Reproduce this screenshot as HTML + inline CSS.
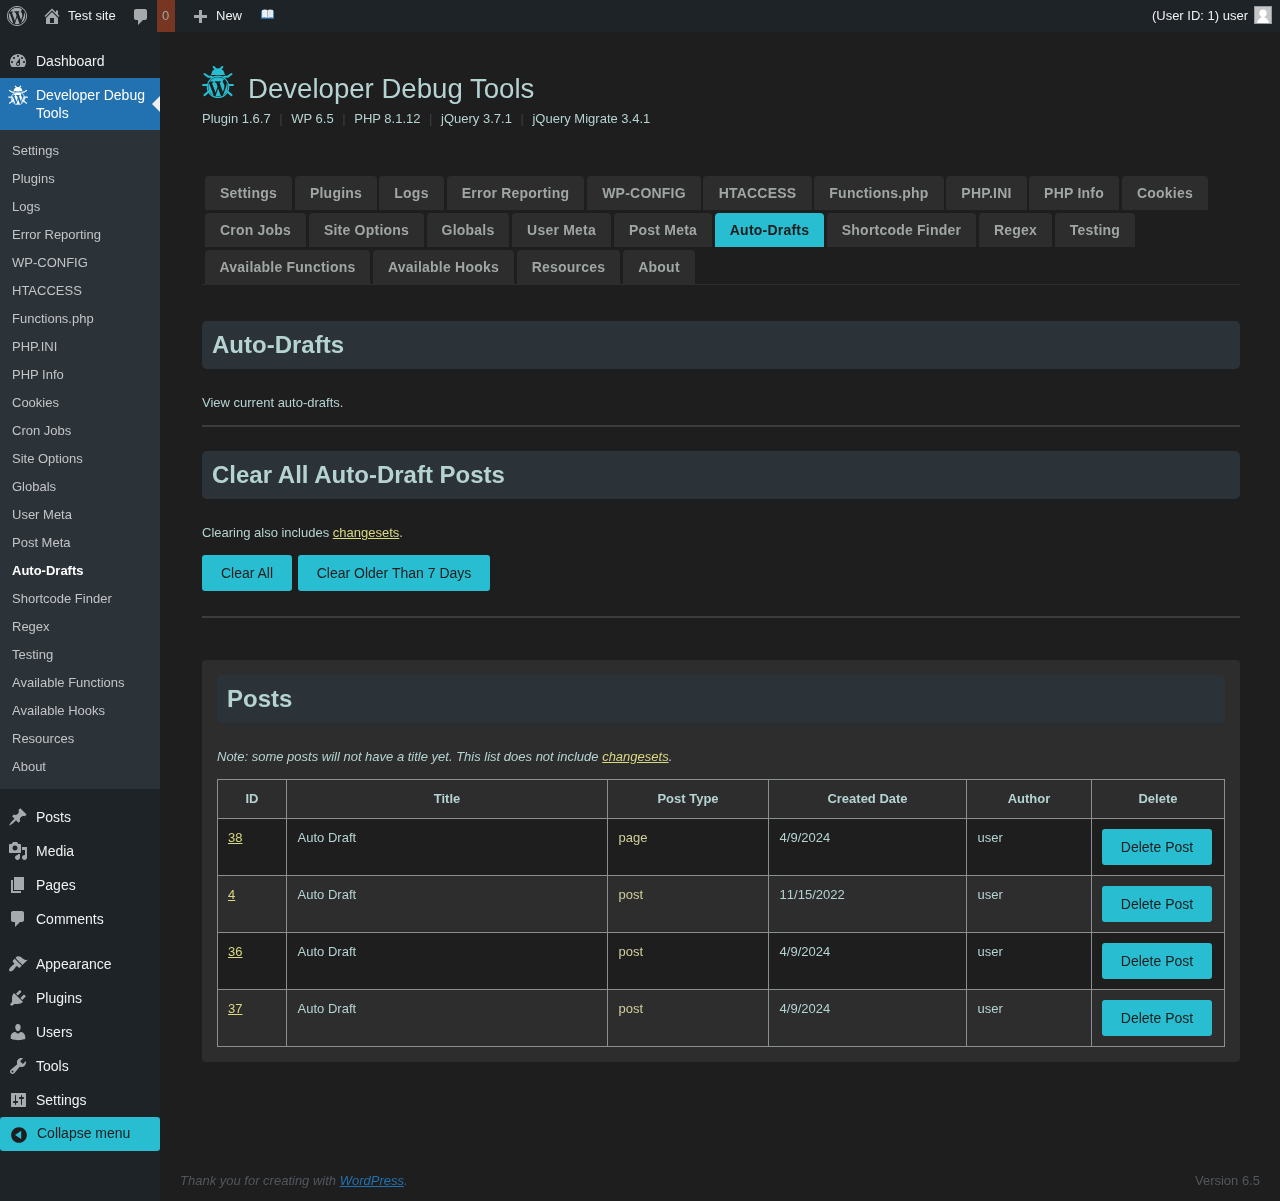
<!DOCTYPE html>
<html lang="en"><head><meta charset="utf-8"><title>Developer Debug Tools</title>
<style>
*{box-sizing:border-box}
html,body{margin:0;padding:0}
body{width:1280px;height:1201px;overflow:hidden;background:#1e1e1e;font-family:"Liberation Sans",sans-serif;font-size:13px;line-height:1.4em;color:#b5d3d2;position:relative}
a{color:#d9d883;text-decoration:underline}
#bar,#menu,#content,#foot{will-change:transform}
#bar{position:absolute;left:0;top:0;width:1280px;height:32px;background:#1d2327;color:#f0f0f1;font-size:13px;line-height:32px}
#bar .it{position:absolute;top:0;height:32px;white-space:nowrap}
#bar svg{position:absolute;color:#a7aaad}
#menu{position:absolute;left:0;top:32px;width:160px;height:1169px;background:#1d2327}
#menu .top{position:absolute;left:0;width:160px;height:34px;color:#f0f0f1;font-size:14px;line-height:18px}
#menu .top span{position:absolute;left:36px;top:8px;white-space:nowrap}
#menu .top svg{position:absolute;left:8px;top:7px;color:#a7aaad}
#menu .cur{background:#2271b1;color:#fff;height:52px}
#menu .cur span{white-space:normal;width:116px}
#sub{position:absolute;left:0;top:98px;width:160px;height:659px;background:#2c3338;padding-top:7px}
#sub div{height:28px;padding:5px 12px;font-size:13px;line-height:18px;color:#c3c4c7;white-space:nowrap}
#sub div.on{color:#fff;font-weight:bold}
#collapse{position:absolute;left:0;top:1085px;width:160px;height:34px;background:#28bdd0;color:#1e1e1e;border-radius:3px;font-size:14px;line-height:34px}
#collapse span{position:absolute;left:37px;top:-1px}
#collapse svg{position:absolute;left:9px;top:8px;color:#1e1e1e}
#content{position:absolute;left:202px;top:32px;width:1038px}
h1{position:absolute;left:46px;top:39px;margin:0;font-size:27.6px;font-weight:normal;line-height:36px;color:#b5d3d2;white-space:nowrap}
#ver{position:absolute;left:0;top:78px;white-space:nowrap;line-height:18px}
#ver i{font-style:normal;color:#3a4046;margin:0 8.700px 0 8.500px}
#tabs{position:absolute;left:0;top:144px;width:1038px;height:109px;border-bottom:1px solid #2d2d2d}
#tabs a{position:absolute;height:34px;padding:0;text-align:center;background:#2d2d2d;color:#9fa6a4;font-weight:bold;font-size:14px;letter-spacing:.22px;line-height:34px;text-decoration:none;border-radius:4px 4px 0 0;white-space:nowrap}
#tabs a.on{background:#28bdd0;color:#1e1e1e}
#tabs br{clear:both}
.hd{position:absolute;left:0;width:1038px;height:48px;background:#2c3338;border-radius:5px;padding:0 10px;font-size:24px;font-weight:bold;line-height:47px;color:#b5d3d2}
.p{position:absolute;left:0;white-space:nowrap;line-height:18px}
.hr{position:absolute;left:0;width:1038px;height:2px;background:#3c3c3c}
.btn{position:absolute;height:36px;background:#28bdd0;color:#1e1e1e;border-radius:3px;font-size:14px;line-height:36px;text-align:center}
#box{position:absolute;left:0;top:628px;width:1038px;height:402px;background:#2d2d2d;border-radius:4px}
#box .hd{left:15px;top:15px;width:1008px}
table{position:absolute;left:15px;top:119px;width:1008px;border-collapse:collapse;table-layout:fixed}
th,td{border:1px solid #8a8f8f;padding:0 10px;vertical-align:top;text-align:left}
th{height:39px;text-align:center;font-weight:bold;line-height:37px}
td{height:57px;padding-top:10px;line-height:18px}
tr.d td{background:#1e1e1e}
td.y{color:#d1ce9d}
td+td{padding-left:10.600px}
td:last-child{padding-left:10px}
td .btn{position:static;display:block;width:110px;margin-top:0}
#foot{position:absolute;left:180px;top:1172px;width:1080px;color:#50575e;font-style:italic;line-height:18px}
#foot a{color:#2271b1}
#foot span{position:absolute;right:0;top:0;font-style:normal}
</style></head><body>

<div id="bar">
<svg style="left:7px;top:6px" width="20" height="20" viewBox="0 0 20 20"><circle cx="10" cy="10" r="9.600" fill="none" stroke="currentColor" stroke-width="1.0"/><g transform="translate(10,10) scale(0.9168) translate(-10,-10)"><path fill="currentColor" stroke="none" d="M7.780 15.370L4.370 6.220c.55-.02 1.170-.08 1.170-.08.5-.06.44-1.130-.06-1.110 0 0-1.450.11-2.370.11-.18 0-.37 0-.58-.01C4.120 2.690 6.870 1.110 10 1.110c2.330 0 4.450.870 6.050 2.340-.68-.11-1.650.39-1.650 1.580 0 .74.45 1.360.9 2.100.35.610.55 1.360.55 2.460 0 1.490-1.400 5-1.400 5l-3.030-8.370c.54-.02.82-.17.82-.17.5-.05.44-1.250-.06-1.220 0 0-1.440.12-2.380.12-.87 0-2.330-.12-2.330-.12-.5-.03-.56 1.200-.06 1.220l.92.080 1.260 3.410zM17.410 10c.24-.64.74-1.870.43-4.250.7 1.290 1.050 2.710 1.050 4.250 0 3.290-1.730 6.240-4.400 7.780.97-2.590 1.940-5.200 2.920-7.780zM6.100 18.090C3.120 16.650 1.110 13.530 1.110 10c0-1.300.23-2.480.72-3.590C3.250 10.300 4.670 14.200 6.100 18.090zm4.030-6.630l2.580 6.980c-.86.29-1.760.45-2.710.45-.79 0-1.570-.11-2.290-.33.81-2.380 1.620-4.740 2.420-7.100z"/></g></svg>
<svg class="" style="left:42px;top:6px" width="20" height="20" viewBox="0 0 20 20"><path fill="currentColor" d="M16 8.5l1.53 1.53-1.06 1.060L10 4.620l-6.470 6.470-1.060-1.060L10 2.500l4 4v-2h2v4zm-6-2.460l6 5.990V18H4v-5.970zM12 17v-5H8v5h4z"/></svg>
<div class="it" style="left:68px">Test site</div>
<svg class="" style="left:131px;top:7px" width="20" height="20" viewBox="0 0 20 20"><path fill="currentColor" d="M5 2h9c1.1 0 2 .9 2 2v7c0 1.1-.9 2-2 2h-2l-5 5v-5H5c-1.1 0-2-.9-2-2V4c0-1.1.9-2 2-2z"/></svg>
<div class="it" style="left:157px;width:18px;background:#763622;color:#9fa3a6;text-align:center;text-indent:-1px">0</div>
<svg class="" style="left:190px;top:8px" width="20" height="20" viewBox="0 0 20 20"><path fill="currentColor" d="M17 7v3h-5v5H9v-5H4V7h5V2h3v5h5z"/></svg>
<div class="it" style="left:216px">New</div>
<svg style="left:261px;top:9px" width="13.200" height="10" viewBox="0 0 13.200 10"><rect x="0" y="1.700" width="13.200" height="8.100" rx=".9" fill="#3a7dbd"/><path d="M1.100 1.100Q4.200 .1 6.400 1.100V8.800Q4.200 7.900 1.100 8.600z" fill="#ecf0f3"/><path d="M12.100 1.100Q9 .1 6.800 1.100V8.800Q9 7.900 12.100 8.600z" fill="#e4e9ee"/><path d="M6.600 1.100V8.900" stroke="#a9b7c2" stroke-width=".5"/></svg>
<div class="it" style="right:32px">(User ID: 1) user</div>
<svg style="left:1254px;top:6px" width="18" height="18" viewBox="0 0 18 18"><rect width="18" height="18" fill="#c6c6c6"/><circle cx="9" cy="7.300" r="3.700" fill="#fff"/><path d="M2.900 17.200C3.400 14.300 5.200 12.500 7.600 11.300L7.800 10.200L10.200 10.200L10.400 11.300C12.800 12.500 14.600 14.300 15.100 17.200z" fill="#fff"/><rect x=".5" y=".5" width="17" height="17" fill="none" stroke="#989ba0"/></svg>
</div>
<div id="menu">
<div class="top" style="top:12px"><svg class="" style="" width="20" height="20" viewBox="0 0 20 20"><path fill="currentColor" d="M3.76 16h12.48c1.1-1.37 1.76-3.11 1.76-5 0-4.42-3.580-8-8-8s-8 3.580-8 8c0 1.890.660 3.630 1.760 5zM10 4c.550 0 1 .450 1 1s-.450 1-1 1-1-.450-1-1 .450-1 1-1zM6 6c.550 0 1 .450 1 1s-.450 1-1 1-1-.450-1-1 .450-1 1-1zm8 0c.550 0 1 .450 1 1s-.450 1-1 1-1-.450-1-1 .450-1 1-1zm-5.370 5.550L12 7v6c0 1.100-.900 2-2 2s-2-.900-2-2c0-.570.240-1.080.630-1.450zM4 10c.550 0 1 .450 1 1s-.450 1-1 1-1-.450-1-1 .450-1 1-1zm12 0c.550 0 1 .450 1 1s-.450 1-1 1-1-.450-1-1 .450-1 1-1zm-5 3c0-.550-.450-1-1-1s-1 .450-1 1 .450 1 1 1 1-.450 1-1z"/></svg><span>Dashboard</span></div>
<div class="top cur" style="top:46px"><svg class="" width="20" height="20.00" viewBox="0 0 32 33" preserveAspectRatio="none" fill="none" stroke="#fff" stroke-linecap="round" stroke-linejoin="round">
<path d="M11.700 2l2.100 2.300M20.300 2l-2.100 2.300" stroke-width="1.9"/>
<path d="M9.100 10.100a6.900 6.900 0 0 1 13.800 0z" fill="#fff" stroke="none"/>
<path d="M2.500 9l3.700 2.700h3.600M29.500 9l-3.700 2.700h-3.600M1.100 20h4.200M30.900 20h-4.200M2.500 30.100l5-4.300M29.500 30.100l-5-4.300" stroke-width="1.9"/>
<circle cx="16" cy="21.9" r="10.700" fill="none" stroke="#fff" stroke-width="1.2"/><g transform="translate(16,21.9) scale(1.0574) translate(-10,-10)"><path fill="#fff" stroke="none" d="M7.780 15.370L4.370 6.220c.55-.02 1.170-.08 1.170-.08.5-.06.44-1.130-.06-1.110 0 0-1.450.11-2.370.11-.18 0-.37 0-.58-.01C4.120 2.690 6.870 1.110 10 1.110c2.330 0 4.450.870 6.050 2.340-.68-.11-1.650.39-1.650 1.580 0 .74.45 1.360.9 2.100.35.610.55 1.360.55 2.460 0 1.490-1.400 5-1.400 5l-3.030-8.370c.54-.02.82-.17.82-.17.5-.05.44-1.250-.06-1.220 0 0-1.440.12-2.380.12-.87 0-2.330-.12-2.330-.12-.5-.03-.56 1.200-.06 1.220l.92.080 1.260 3.410zM17.410 10c.24-.64.74-1.870.43-4.250.7 1.290 1.050 2.710 1.050 4.250 0 3.290-1.730 6.240-4.400 7.780.97-2.590 1.940-5.200 2.920-7.780zM6.100 18.090C3.120 16.650 1.110 13.530 1.110 10c0-1.300.23-2.480.72-3.590C3.250 10.300 4.670 14.200 6.100 18.090zm4.030-6.630l2.580 6.980c-.86.29-1.760.45-2.710.45-.79 0-1.570-.11-2.290-.33.81-2.380 1.620-4.740 2.420-7.100z"/></g>
</svg><span>Developer Debug Tools</span><b style="position:absolute;right:0;top:18px;width:0;height:0;border:8px solid transparent;border-right-color:#f0f0f1;border-left:0"></b></div>
<div id="sub">
<div>Settings</div>
<div>Plugins</div>
<div>Logs</div>
<div>Error Reporting</div>
<div>WP-CONFIG</div>
<div>HTACCESS</div>
<div>Functions.php</div>
<div>PHP.INI</div>
<div>PHP Info</div>
<div>Cookies</div>
<div>Cron Jobs</div>
<div>Site Options</div>
<div>Globals</div>
<div>User Meta</div>
<div>Post Meta</div>
<div class=on>Auto-Drafts</div>
<div>Shortcode Finder</div>
<div>Regex</div>
<div>Testing</div>
<div>Available Functions</div>
<div>Available Hooks</div>
<div>Resources</div>
<div>About</div>
</div>
<div class="top" style="top:768px"><svg class="" style="" width="20" height="20" viewBox="0 0 20 20"><path fill="currentColor" d="M10.44 3.02l1.82-1.82 6.36 6.35-1.83 1.82c-1.05-.68-2.48-.57-3.41.36l-.75.75c-.92.93-1.04 2.35-.35 3.41l-1.83 1.82-2.41-2.41-2.8 2.79c-.42.42-3.38 2.71-3.8 2.29s1.86-3.39 2.28-3.81l2.79-2.79L4.1 9.36l1.83-1.82c1.05.69 2.48.57 3.4-.36l.75-.75c.93-.92 1.05-2.35.36-3.41z"/></svg><span>Posts</span></div>
<div class="top" style="top:802px"><svg class="" style="" width="20" height="20" viewBox="0 0 20 20"><path fill="currentColor" d="M13 11V4c0-.55-.45-1-1-1h-1.67L9 1H5L3.67 3H2c-.55 0-1 .45-1 1v7c0 .55.45 1 1 1h10c.55 0 1-.45 1-1zM7 4.5c1.38 0 2.5 1.12 2.5 2.5S8.38 9.5 7 9.5 4.5 8.38 4.5 7 5.62 4.5 7 4.5zM14 6h5v10.5c0 1.38-1.12 2.5-2.5 2.5S14 17.880 14 16.5s1.12-2.5 2.5-2.5c.17 0 .34.02.5.05V9h-3V6zm-4 8.050V13h2v3.5c0 1.38-1.12 2.5-2.5 2.5S7 17.880 7 16.5 8.120 14 9.5 14c.17 0 .34.02.5.05z"/></svg><span>Media</span></div>
<div class="top" style="top:836px"><svg class="" style="" width="20" height="20" viewBox="0 0 20 20"><path fill="currentColor" d="M6 15V2h10v13H6zm-1 1h8v2H3V5h2v11z"/></svg><span>Pages</span></div>
<div class="top" style="top:870px"><svg class="" style="" width="20" height="20" viewBox="0 0 20 20"><path fill="currentColor" d="M5 2h9c1.1 0 2 .9 2 2v7c0 1.1-.9 2-2 2h-2l-5 5v-5H5c-1.1 0-2-.9-2-2V4c0-1.1.9-2 2-2z"/></svg><span>Comments</span></div>
<div class="top" style="top:915px"><svg class="" style="" width="20" height="20" viewBox="0 0 20 20"><path fill="currentColor" d="M14.48 11.06L7.41 3.99l1.5-1.5c.5-.56 2.3-.47 3.51.32 1.21.8 1.43 1.28 2.91 2.1 1.180.64 2.450 1.260 4.450.850zm-.71.71L6.700 4.700 4.930 6.470c-.390.390-.390 1.020 0 1.410l1.060 1.060c.390.390.390 1.030 0 1.420-.6.6-1.430 1.110-2.210 1.690-.350.260-.7.530-1.010.840C1.430 14.230.4 16.080 1.400 17.070c.990 1 2.840-.030 4.180-1.360.310-.310.580-.660.850-1.020.570-.780 1.080-1.610 1.690-2.210.390-.390 1.020-.390 1.410 0l1.060 1.060c.390.390 1.020.390 1.410 0z"/></svg><span>Appearance</span></div>
<div class="top" style="top:949px"><svg class="" style="" width="20" height="20" viewBox="0 0 20 20"><path fill="currentColor" d="M13.11 4.36L9.87 7.6 8 5.73l3.24-3.24c.35-.34 1.05-.2 1.56.32.52.51.66 1.21.31 1.55zm-8 1.77l.91-1.120 9.010 9.010-1.190.840c-.710.710-2.630 1.160-3.820 1.160H6.140L4.900 17.260c-.590.590-1.540.590-2.120 0-.590-.580-.590-1.530 0-2.120l1.240-1.240v-3.880c0-1.130.4-3.190 1.090-3.890zm7.260 3.970l3.240-3.240c.340-.350 1.040-.210 1.550.310.520.510.660 1.210.310 1.550l-3.240 3.250z"/></svg><span>Plugins</span></div>
<div class="top" style="top:983px"><svg class="" style="" width="20" height="20" viewBox="0 0 20 20"><path fill="currentColor" d="M10 9.25c-2.27 0-2.73-3.44-2.73-3.44C7 4.02 7.82 2 9.97 2c2.16 0 2.98 2.020 2.710 3.810 0 0-.410 3.440-2.680 3.440zm0 2.570L12.720 10c2.390 0 4.520 2.330 4.520 4.530v2.490s-3.650 1.130-7.240 1.130c-3.650 0-7.240-1.130-7.240-1.130v-2.490c0-2.250 1.940-4.480 4.470-4.480z"/></svg><span>Users</span></div>
<div class="top" style="top:1017px"><svg class="" style="" width="20" height="20" viewBox="0 0 20 20"><path fill="currentColor" d="M16.68 9.77c-1.34 1.34-3.3 1.67-4.95.99l-5.410 6.520c-.990.990-2.590.990-3.580 0s-.990-2.590 0-3.570l6.520-5.420c-.680-1.650-.350-3.610.990-4.950 1.280-1.280 3.120-1.620 4.720-1.060l-2.890 2.890 2.820 2.820 2.860-2.870c.530 1.580.180 3.390-1.080 4.650zM3.810 16.210c.4.390 1.040.390 1.430 0 .4-.4.4-1.040 0-1.430-.390-.4-1.030-.4-1.430 0-.390.390-.390 1.030 0 1.430z"/></svg><span>Tools</span></div>
<div class="top" style="top:1051px"><svg class="" style="" width="20" height="20" viewBox="0 0 20 20"><path fill="currentColor" d="M18 16V4c0-.55-.45-1-1-1H4c-.55 0-1 .45-1 1v12c0 .55.45 1 1 1h13c.55 0 1-.45 1-1zM8 11h1c.55 0 1 .45 1 1s-.45 1-1 1H8v1.5c0 .28-.22.5-.5.5s-.5-.22-.5-.5V13H6c-.55 0-1-.45-1-1s.45-1 1-1h1V5.500c0-.28.22-.5.5-.5s.5.220.5.5V11zm5-2h-1c-.55 0-1-.45-1-1s.45-1 1-1h1V5.500c0-.28.22-.5.5-.5s.5.220.5.5V7h1c.55 0 1 .45 1 1s-.45 1-1 1h-1v5.500c0 .28-.22.5-.5.5s-.5-.22-.5-.5V9z"/></svg><span>Settings</span></div>
<div id="collapse"><svg class="" style="" width="20" height="20" viewBox="0 0 20 20"><path fill="currentColor" d="M10 2.16c4.33 0 7.84 3.51 7.84 7.84s-3.51 7.840-7.840 7.840S2.160 14.330 2.160 10 5.670 2.160 10 2.160zM12.200 14V5.800L6 9.900l6.200 4.100z"/></svg><span>Collapse menu</span></div>
</div>
<div id="content">
<div style="position:absolute;left:0;top:33px"><svg class="" width="32" height="33.00" viewBox="0 0 32 33" preserveAspectRatio="none" fill="none" stroke="#28bdd0" stroke-linecap="round" stroke-linejoin="round">
<path d="M11.700 2l2.100 2.300M20.300 2l-2.100 2.300" stroke-width="2.1"/>
<path d="M9.100 10.100a6.900 6.900 0 0 1 13.800 0z" fill="#28bdd0" stroke="none"/>
<path d="M2.500 9l3.700 2.700h3.600M29.500 9l-3.700 2.700h-3.600M1.100 20h4.200M30.900 20h-4.200M2.500 30.100l5-4.300M29.500 30.100l-5-4.300" stroke-width="2.1"/>
<circle cx="16" cy="21.9" r="10.750" fill="none" stroke="#28bdd0" stroke-width="1.1"/><g transform="translate(16,21.9) scale(1.0911) translate(-10,-10)"><path fill="#28bdd0" stroke="none" d="M7.780 15.370L4.370 6.220c.55-.02 1.170-.08 1.170-.08.5-.06.44-1.130-.06-1.110 0 0-1.450.11-2.370.11-.18 0-.37 0-.58-.01C4.120 2.690 6.870 1.110 10 1.110c2.330 0 4.450.870 6.050 2.340-.68-.11-1.650.39-1.650 1.580 0 .74.45 1.360.9 2.100.35.610.55 1.360.55 2.460 0 1.490-1.400 5-1.400 5l-3.030-8.370c.54-.02.82-.17.82-.17.5-.05.44-1.250-.06-1.220 0 0-1.440.12-2.380.12-.87 0-2.330-.12-2.330-.12-.5-.03-.56 1.200-.06 1.220l.92.080 1.260 3.410zM17.410 10c.24-.64.74-1.870.43-4.250.7 1.290 1.050 2.710 1.050 4.250 0 3.290-1.730 6.240-4.400 7.780.97-2.590 1.940-5.200 2.920-7.780zM6.100 18.090C3.120 16.650 1.110 13.530 1.110 10c0-1.300.23-2.480.72-3.590C3.250 10.300 4.670 14.200 6.100 18.090zm4.030-6.630l2.580 6.980c-.86.29-1.760.45-2.710.45-.79 0-1.570-.11-2.290-.33.81-2.380 1.620-4.740 2.420-7.100z"/></g>
</svg></div>
<h1>Developer Debug Tools</h1>
<div id="ver">Plugin 1.6.7<i>|</i>WP 6.5<i>|</i>PHP 8.1.12<i>|</i>jQuery 3.7.1<i>|</i>jQuery Migrate 3.4.1</div>
<div id="tabs">
<a style="left:3px;top:0px;width:87px">Settings</a>
<a style="left:93px;top:0px;width:82px">Plugins</a>
<a style="left:177px;top:0px;width:65px">Logs</a>
<a style="left:245px;top:0px;width:137px">Error Reporting</a>
<a style="left:385px;top:0px;width:114px">WP-CONFIG</a>
<a style="left:501px;top:0px;width:109px">HTACCESS</a>
<a style="left:612px;top:0px;width:130px">Functions.php</a>
<a style="left:744px;top:0px;width:81px">PHP.INI</a>
<a style="left:827px;top:0px;width:90px">PHP Info</a>
<a style="left:920px;top:0px;width:86px">Cookies</a>
<a style="left:3px;top:37px;width:101px">Cron Jobs</a>
<a style="left:107px;top:37px;width:115px">Site Options</a>
<a style="left:225px;top:37px;width:82px">Globals</a>
<a style="left:310px;top:37px;width:99px">User Meta</a>
<a style="left:412px;top:37px;width:98px">Post Meta</a>
<a class=on style="left:513px;top:37px;width:109px">Auto-Drafts</a>
<a style="left:625px;top:37px;width:149px">Shortcode Finder</a>
<a style="left:777px;top:37px;width:73px">Regex</a>
<a style="left:853px;top:37px;width:80px">Testing</a>
<a style="left:3px;top:74px;width:165px">Available Functions</a>
<a style="left:171px;top:74px;width:141px">Available Hooks</a>
<a style="left:315px;top:74px;width:103px">Resources</a>
<a style="left:421px;top:74px;width:72px">About</a>
</div>
<div class="hd" style="top:289px">Auto-Drafts</div>
<div class="p" style="top:362px">View current auto-drafts.</div>
<div class="hr" style="top:393px"></div>
<div class="hd" style="top:419px">Clear All Auto-Draft Posts</div>
<div class="p" style="top:492px">Clearing also includes <a>changesets</a>.</div>
<div class="btn" style="left:0;top:523px;width:90px">Clear All</div>
<div class="btn" style="left:96px;top:523px;width:192px">Clear Older Than 7 Days</div>
<div class="hr" style="top:584px"></div>
<div id="box"><div class="hd">Posts</div>
<div class="p" style="left:15px;top:88px;font-style:italic">Note: some posts will not have a title yet. This list does not include <a>changesets</a>.</div>
<table><colgroup><col style="width:69px"><col style="width:321px"><col style="width:161px"><col style="width:198px"><col style="width:125px"><col style="width:133px"></colgroup>
<tr><th>ID</th><th>Title</th><th>Post Type</th><th>Created Date</th><th>Author</th><th>Delete</th></tr>
<tr class=d><td><a>38</a></td><td>Auto Draft</td><td class="y">page</td><td>4/9/2024</td><td>user</td><td><div class="btn">Delete Post</div></td></tr>
<tr><td><a>4</a></td><td>Auto Draft</td><td class="y">post</td><td><span style="font-kerning:none">11</span>/15/2022</td><td>user</td><td><div class="btn">Delete Post</div></td></tr>
<tr class=d><td><a>36</a></td><td>Auto Draft</td><td class="y">post</td><td>4/9/2024</td><td>user</td><td><div class="btn">Delete Post</div></td></tr>
<tr><td><a>37</a></td><td>Auto Draft</td><td class="y">post</td><td>4/9/2024</td><td>user</td><td><div class="btn">Delete Post</div></td></tr>
</table></div>
</div>
<div id="foot">Thank you for creating with <a>WordPress</a>.<span>Version 6.5</span></div>
</body></html>
